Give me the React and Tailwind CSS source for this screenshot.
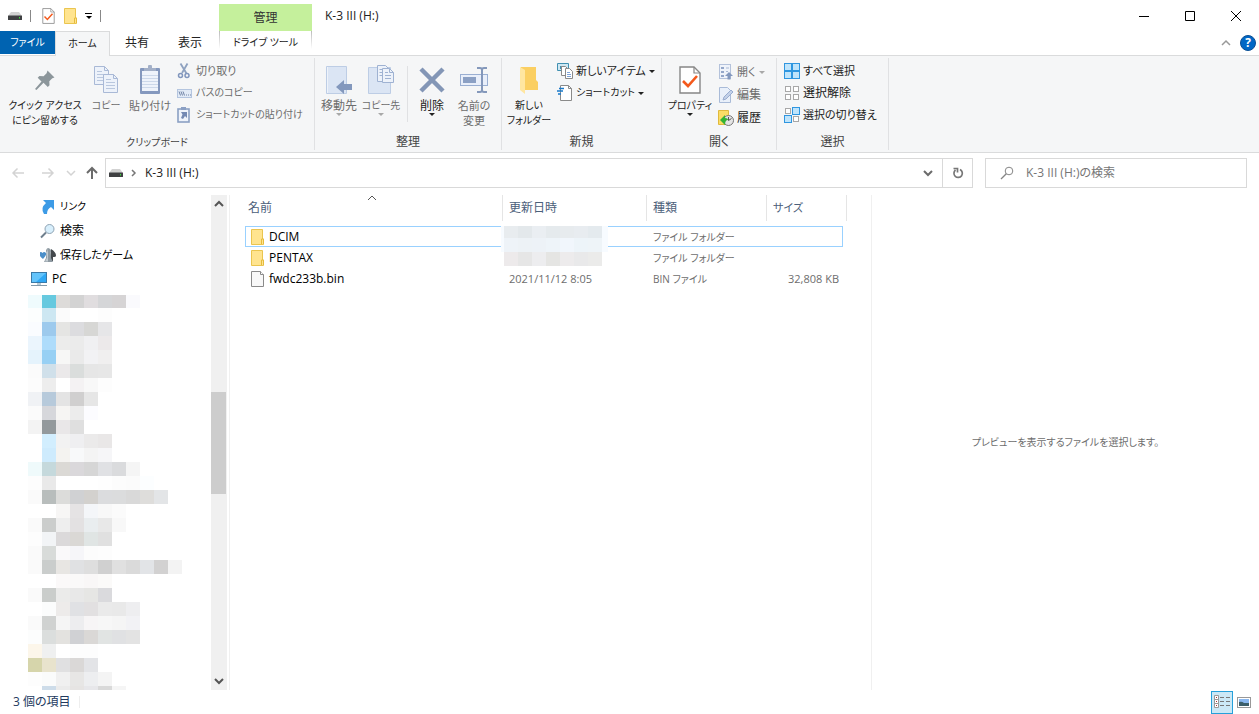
import React, { useState } from 'react';

// ---------- pixelated areas: 14px cells, '' = empty ----------
const treeCells = [
  ['#effbfd', '#66c9df', '#dddbd9', '#d3d3d3', '#e0dddf', '#d5d6d8', '#d6d4d5', '#fafafd'],
  ['#fcfefe', '#cde7f2', '#fbfbfb', '', '', '#fdfdfd'],
  ['#fafcff', '#9dcaed', '#e5e5e3', '#dcdcdf', '#d7d7d5', '#e6e6e8'],
  ['#ebf5fd', '#aedcfb', '#ececeb', '#ebebeb', '#f0f0f2', '#ece9ea'],
  ['#e5f3fc', '#97d0f4', '#f7f7f6', '#eaeaea', '#f2f2f4', '#f0efef'],
  ['#fbfbfb', '#d0e0ea', '#ebe9ea', '#dadddc', '#e6e6e6', '#e7e7e7'],
  ['#fcfcfc', '#ededed', '', '#f4f2f3', '#f8f8f8', '#fdfdfd'],
  ['#f0f2f5', '#b7cadb', '#e4e4e4', '#d0cfcf', '#e6e6e6'],
  ['#fbfbfb', '#d6d7db', '#f6f5f3', '#ececec', '#fcfcff'],
  ['#f3f3f3', '#93999c', '#e9e7e8', '#dfdfdf'],
  ['', '#d2eefe', '#f2f2f2', '#efeff1', '#ebeaea', '#e9e7e7'],
  ['', '#ceebfd', '#f4f3f0', '#f8f9fa', '#f4f4f4', '#f6f6f8'],
  ['#effafb', '#c5d9dc', '#dbd9d5', '#dad8db', '#d6d6d6', '#e0e1e4', '#dadbdd', '#f5f5f5'],
  ['#fdfdfd', '#e9e9e9', '', '', '', '#fefefe', '#fcfcfc', '#fbfbfb', '#fcfeff'],
  ['#fafafa', '#b8bdbc', '#dcdcda', '#d0d1d3', '#d3d1ce', '#dbdcde', '#dbdcdd', '#d9d9d9', '#dedddb', '#e3e5e7'],
  ['', '', '#f7f6f5', '#e5e3e4', '#f4f6f9', '#f8f8f8', '#fbfbfb'],
  ['#fafafa', '#cbcdcc', '#eeeeee', '#e3e1e2', '#e9edef', '#e8e8e8', '#f8f8f8'],
  ['#fdfdfd', '#f2f4f6', '#dbd9da', '#dad8d5', '#e0e5e4', '#e0e0e0'],
  ['#fafafa', '#d8dbd9', '#faf9fa', '#f6f6f9', '#fcfcfc', '#fdfdfd'],
  ['#fafafa', '#cacdcc', '#e8e6e3', '#e0e1e3', '#dedede', '#d0d0d0', '#e0e0e0', '#dadada', '#e2e4e7', '#d2d1d1', '#f3f3f3'],
  ['', '', '#fbf9f9', '#faf9f9', '#f9f7f7', '#fbfaf9'],
  ['#fafafa', '#cacdcb', '#ebebea', '#e8e8e8', '#e6e6e4', '#dadadd'],
  ['', '#fbfcfc', '#edebea', '#e0e1e4', '#e2e0e1', '#eaeaea', '#e9e9e9', '#eeeef0'],
  ['#fafafa', '#d0d2d1', '#f5f5f5', '#ededef', '#f7f5f6', '#f7f7f7', '#f5f5f5', '#f2f2f5'],
  ['#fcfdfd', '#dbdedd', '#e3e2df', '#d0d1d4', '#dad8d6', '#e1e4e3', '#e0e1e3', '#e3e3e3'],
  ['#fcf6ea', '#eff0f0', '', '#fdfdfd', '#fdfdfd'],
  ['#d6d5ab', '#e8e3cd', '#e0e0e1', '#dad8d7', '#e3e4e7'],
  ['#fdfdfd', '#fafbfb', '#f0f0f0', '#e7e6e5', '#edeef0', '#f4f4f4'],
  ['', '#cddce9', '#ebebeb', '#e6e4e3', '#e7e7ea', '#d9d9d9', '#f5f5f5'],
];

const dateCells = [
  ['#e8ecef', '#e3e8eb', '#eaeef2', '#e5eaed', '#e7ebee', '#e8ecf0', '#e4eaee'],
  ['#eef3f8', '#edf2f6', '#edf2f7', '#eef4f9', '#f1f6fc', '#edf4f9', '#eef4f8'],
  ['#edeaeb', '#e6e6e6', '#ededef', '#e5e5e3', '#edebec', '#e9e9ea', '#ebebea'],
];

function Cells({ rows, x = 0, y = 0 }) {
  return rows.map((row, r) =>
    row.map((c, i) => c && <rect key={`${r}-${i}`} x={x + i * 14} y={y + r * 14} width="14" height="14" fill={c} />)
  );
}

// ---------- icons ----------
function Svg({ w = 16, h = 16, children, className = '' }) {
  return (
    <svg width={w} height={h} viewBox={`0 0 ${w} ${h}`} fill="none" className={`block shrink-0 ${className}`} aria-hidden="true">
      {children}
    </svg>
  );
}

const Drive = () => (
  <Svg w={14} h={10}>
    <path d="M3 1h8l3 4H0z" fill="#d2d2d2" />
    <rect y="4.500" width="14" height="4.500" rx="0.500" fill="#3f4042" />
    <rect x="11" y="6" width="1" height="1.500" fill="#3be03b" />
  </Svg>
);

const CheckDoc = ({ w = 13, h = 16 }) => (
  <svg width={w} height={h} viewBox="0 0 22 28" fill="none" className="block shrink-0" aria-hidden="true">
    <path d="M1 1h14l6 6v20H1z" fill="#fff" stroke="#878787" strokeWidth="1.400" />
    <path d="M15 1v6h6" stroke="#878787" strokeWidth="1.200" />
    <path d="M4 15l5 5 9-10" stroke="#f4591c" strokeWidth="2.600" />
  </svg>
);

const Folder = () => (
  <Svg w={13} h={16}>
    <path d="M0.500 0.500h11v9.500h1v5.500h-12z" fill="#ffe48f" stroke="#eac54f" />
    <path d="M10.500 15v-5h2v5" fill="#ffe48f" stroke="#e5bb3d" />
  </Svg>
);

const FileIcon = () => (
  <Svg w={13} h={16}>
    <path d="M0.500 0.500h9l3 3v12h-12z" fill="#f8f8f8" stroke="#8a8a8a" />
    <path d="M9.500 0.500v3h3" fill="#fff" stroke="#8a8a8a" />
  </Svg>
);

const Pin = () => (
  <Svg w={20} h={20}>
    <path d="M12.500 0.500l7 7-2.200 0.800-3 3 0.200 4-1.700 1.700-4.300-4.300L1.500 20 0 19l6.500-7.500-3.800-3.800 1.700-1.700 4.200 0.200 3-3z" fill="#8c969b" />
  </Svg>
);

const Page = ({ x, y }) => (
  <g transform={`translate(${x} ${y})`}>
    <path d="M0.500 0.500h10l4 4v14h-14z" fill="#edf2fa" stroke="#a9b9d6" />
    <path d="M10.500 0.500v4h4" stroke="#a9b9d6" />
    <path d="M3 5.500h5M3 8.500h9M3 11.500h9M3 14.500h9" stroke="#b9c7de" />
  </g>
);

const Copy = () => (
  <Svg w={24} h={30}>
    <Page x={0} y={1} />
    <Page x={9} y={9} />
  </Svg>
);

const Paste = () => (
  <Svg w={20} h={30}>
    <rect y="3" width="20" height="26" rx="1" fill="#8498be" />
    <rect x="2" y="6" width="16" height="20" fill="#eef3fb" />
    <path d="M2 10.500h16M2 13.500h16M2 16.500h16M2 19.500h16M2 22.500h16" stroke="#ccd8ea" />
    <path d="M4 6V3h4V1.500a1.500 1.500 0 0 1 4 0V3h4v3z" fill="#a3b0c8" />
  </Svg>
);

const MoveTo = () => (
  <Svg w={26} h={30}>
    <path d="M0.500 1.500h20v27h-20z" fill="#dbe5f4" stroke="#bdcde5" />
    <path d="M1.500 2v26" stroke="#eef3fa" />
    <path d="M10 22l8-7v4h8v6h-8v4z" fill="#8398bd" />
  </Svg>
);

const CopyTo = () => (
  <Svg w={26} h={30}>
    <path d="M0.500 2.500h22v26h-22z" fill="#dbe5f4" stroke="#bdcde5" />
    <g stroke="#9fb2d2">
      <path d="M9.500 0.500h8l3 3v13h-11z" fill="#edf2fa" />
      <path d="M11.500 4.500h5M11.500 7.500h5M11.500 10.500h5" />
      <path d="M14.500 3.500h7l4 4v10h-11z" fill="#edf2fa" />
      <path d="M21.500 3.500v4h4M17 7.500h3M17 10.500h6M17 13.500h6" />
    </g>
  </Svg>
);

const Delete = () => (
  <Svg w={26} h={26}>
    <path d="M2 2l22 22M24 2L2 24" stroke="#8396b6" strokeWidth="4.500" />
  </Svg>
);

const Rename = () => (
  <Svg w={28} h={28}>
    <rect x="0.500" y="8.500" width="27" height="11" fill="#e9effa" stroke="#9aafd2" />
    <rect x="3" y="11" width="13" height="6" fill="#8ba0c4" />
    <path d="M17 2h3q2 0 2 2v20q0 2-2 2h-3M27 2h-3q-2 0-2 2M27 26h-3q-2 0-2-2" stroke="#8498bb" strokeWidth="2" />
  </Svg>
);

const NewFolder = () => (
  <Svg w={20} h={28}>
    <path d="M2 1h15v13l2 2v8H2z" fill="#fbcf62" />
    <path d="M1 1l5 3v24l-5-4z" fill="#ffe6a0" />
  </Svg>
);

const Scissors = () => (
  <Svg>
    <path d="M3.500 0.500l6 10M10.500 0.500L5 10" stroke="#8fa2c0" strokeWidth="1.800" />
    <circle cx="3.500" cy="12.500" r="2" stroke="#8196bd" strokeWidth="1.500" />
    <circle cx="10" cy="12.500" r="2" stroke="#8196bd" strokeWidth="1.500" />
  </Svg>
);

const PathIcon = () => (
  <Svg>
    <rect x="0.500" y="4.500" width="14" height="8" fill="#e1eaf6" stroke="#b4c5df" />
    <path d="M2 6.500l1.500 4M4 6.500l1.500 4M6 6.500l1.500 4" stroke="#6f82a5" />
    <path d="M9 10h1M11 10h1M13 10h1" stroke="#6f82a5" />
  </Svg>
);

const PasteLink = () => (
  <Svg>
    <rect x="1" y="2" width="11" height="13" fill="#eef3fb" stroke="#8ba0c4" strokeWidth="1.600" />
    <rect x="4" y="0" width="5" height="3" fill="#8ba0c4" />
    <path d="M4 5h6v6L8 9 6 12 4 11l1.500-3.500z" fill="#7389b3" />
  </Svg>
);

const NewItem = () => (
  <Svg>
    <path d="M0.500 0.500h11v7h-11z" fill="#cfe8f3" stroke="#4190b1" />
    <path d="M3 3h3v3H3z" fill="#4190b1" />
    <path d="M4.500 3.500h4l2 2v7h-6z" fill="#fff" stroke="#8a8a8a" />
    <path d="M8.500 5.500h4l3 3v7h-7z" fill="#fff" stroke="#8a8a8a" />
    <path d="M10 9.500h3M10 11.500h4M10 13.500h4" stroke="#7ea3d8" />
  </Svg>
);

const Shortcut = () => (
  <Svg>
    <path d="M3.500 0.500h8l3 3v12h-11z" fill="#fff" stroke="#8a8a8a" />
    <path d="M11.500 0.500v3h3" stroke="#8a8a8a" />
    <path d="M2 3.500h5M0 6h6M1 9h3" stroke="#1979ca" strokeWidth="1.500" />
  </Svg>
);

const OpenIcon = () => (
  <Svg>
    <rect x="1.500" y="0.500" width="11" height="14" fill="#eff3fa" stroke="#b4c2db" />
    <path d="M3 3h3v2H3zM3 7h3v2H3zM3 11h3v2H3z" fill="#94a7c9" />
    <path d="M8 4h3M8 7.500h2" stroke="#a9b9d4" />
    <path d="M7 12l4-4 4 4h-2.500v3.500h-3V12z" fill="#8398bd" />
  </Svg>
);

const EditIcon = () => (
  <Svg>
    <path d="M1.500 0.500h8l3 3v12h-11z" fill="#e9f0fa" stroke="#a9bbd8" />
    <path d="M5 13l1-3 7-7 2 2-7 7z" fill="#c3d1e8" stroke="#98acd0" />
  </Svg>
);

const HistoryIcon = () => (
  <Svg>
    <path d="M0.500 0.500h10v14h-10z" fill="#fbdd66" stroke="#e0b93c" />
    <circle cx="10.500" cy="10.500" r="5" fill="#e4e4e4" stroke="#777" />
    <path d="M10.500 7v3.500l3-2" stroke="#555" />
    <path d="M2 10l5-5v3q3 0 3 2-3 0-3 5z" fill="#35b334" />
  </Svg>
);

const boxes = [[1, 1], [9, 1], [1, 9], [9, 9]];

// mask holds which of the four boxes are filled
const SelectIcon = ({ mask }) => (
  <Svg>
    {boxes.map(([x, y], i) =>
      mask[i] ? (
        <rect key={i} x={x - 0.5} y={y - 0.5} width="7" height="7" fill="#bfe4fb" stroke="#2f96e0" />
      ) : (
        <rect key={i} x={x + 0.5} y={y + 0.5} width="5" height="5" fill="#fff" stroke="#a8a8a8" />
      )
    )}
    {mask.every(Boolean) && <path d="M8 0v16M0 8h16" stroke="#2f96e0" strokeWidth="1.500" />}
  </Svg>
);

const LinkIcon = () => (
  <Svg>
    <path d="M3 1h11v10l-3-3q-4 2-4 7H4q-4-6 2-11z" fill="#3d9be6" />
  </Svg>
);

const Magnifier = () => (
  <Svg>
    <circle cx="9.500" cy="6" r="4.500" fill="#d8effc" stroke="#8fa3b3" />
    <path d="M6 9.500L1 14.500" stroke="#6f7f8d" strokeWidth="2" />
  </Svg>
);

const GameIcon = () => (
  <Svg>
    <path d="M11 2q5 3 5 6.500 0 2-3 1.500v4h-3z" fill="#43484c" />
    <path d="M8 1a3 3 0 0 1 2.500 4.500L11 11l2 4H4l2-4 0.500-5.500A3 3 0 0 1 8 1z" fill="#8e9aa2" />
    <path d="M8 1.500v13H5l2-4V5.500z" fill="#c3ccd2" />
    <path d="M-1 6q2-2 3.500 0Q4 4 6 6q1 2-3 6Q-1 9-1 6z" fill="#4c8fc9" />
  </Svg>
);

const PcIcon = () => (
  <Svg w={17}>
    <rect x="0.500" y="1.500" width="15" height="10" fill="#2fa8f5" stroke="#3a7aa8" />
    <path d="M1 2h14L5 11H1z" fill="#63c4fb" />
    <path d="M6 12h4v2H6z" fill="#b9cbd6" />
    <path d="M0 14.500h16" stroke="#8299a9" />
  </Svg>
);

const Chevron = ({ dir = 'down', color = '#555', sw = 1.5 }) => {
  const d = { down: 'M1 3l4 4 4-4', up: 'M1 7l4-4 4 4', right: 'M3 2l3 3-3 3' }[dir];
  return (
    <Svg w={10} h={10}>
      <path d={d} stroke={color} strokeWidth={sw} />
    </Svg>
  );
};

const Caret = ({ color = '#222' }) => (
  <Svg w={6} h={3}>
    <path d="M0 0h6L3 3z" fill={color} />
  </Svg>
);

const Arrow = ({ dir, color }) => {
  const d = { left: 'M13 7H2M6.500 2.500L2 7l4.500 4.500', right: 'M1 7h11M7.500 2.500L12 7l-4.500 4.500', up: 'M7 13V2M2 7l5-5 5 5' }[dir];
  return (
    <Svg w={14} h={14}>
      <path d={d} stroke={color} strokeWidth={dir === 'up' ? 2 : 1.5} />
    </Svg>
  );
};

// ---------- ribbon ----------
// size: text-xs for kanji labels, smaller for the ones made of kana
function BigButton({ icon, lines, width, disabled, caret, size = 'text-xs' }) {
  return (
    <button type="button" disabled={disabled} className={`flex flex-col items-center ${width} ${size} ${disabled ? 'text-[#6d6d6d]' : 'text-[#222]'}`}>
      <span className="flex h-8 items-center justify-center">{icon}</span>
      <span className="mt-0.5 flex flex-col items-center whitespace-nowrap leading-[15px]">
        {lines.map((l) => (
          <span key={l}>{l}</span>
        ))}
      </span>
      {caret && <Caret color={disabled ? '#a8a8a8' : '#222'} />}
    </button>
  );
}

function SmallButton({ icon, label, disabled, caret, size = 'text-xs' }) {
  return (
    <button type="button" disabled={disabled} className={`flex h-[22px] items-center gap-[3px] whitespace-nowrap ${size} ${disabled ? 'text-[#6d6d6d]' : 'text-[#222]'}`}>
      {icon}
      <span>{label}</span>
      {caret && <Caret color={disabled ? '#a8a8a8' : '#222'} />}
    </button>
  );
}

function Group({ label, width, size = 'text-xs', children }) {
  return (
    <section className={`my-0.5 flex shrink-0 flex-col border-r border-[#e0e1e3] ${width}`}>
      <div className="flex flex-1">{children}</div>
      <h2 className={`text-center leading-4 text-[#444] ${size}`}>{label}</h2>
    </section>
  );
}

function Ribbon() {
  return (
    <div className="flex h-[98px] border-y border-[#dadbdc] bg-[#f5f6f7]">
      <Group label="クリップボード" width="w-[315px]" size="text-[10px]">
        <div className="flex pl-[5px] pt-1.5">
          <BigButton icon={<Pin />} lines={['クイック アクセス', 'にピン留めする']} width="w-20" size="text-[10px]" />
          <BigButton icon={<Copy />} lines={['コピー']} width="w-[42px]" size="text-[10px]" disabled />
          <BigButton icon={<Paste />} lines={['貼り付け']} width="w-[46px]" size="text-[11px]" disabled />
        </div>
        <div className="flex flex-col pl-1 pt-0.5">
          <SmallButton icon={<Scissors />} label="切り取り" size="text-[11px]" disabled />
          <SmallButton icon={<PathIcon />} label="パスのコピー" size="text-[10px]" disabled />
          <SmallButton icon={<PasteLink />} label="ショートカットの貼り付け" size="text-[10px]" disabled />
        </div>
      </Group>
      <Group label="整理" width="w-[187px]">
        <div className="flex pl-[3px] pt-1.5">
          <BigButton icon={<MoveTo />} lines={['移動先']} width="w-[42px]" disabled caret />
          <BigButton icon={<CopyTo />} lines={['コピー先']} width="w-[42px]" size="text-[10px]" disabled caret />
          <div className="ml-[5px] mr-0.5 mt-0.5 h-14 w-px bg-[#e0e1e3]" />
          <BigButton icon={<Delete />} lines={['削除']} width="w-11" caret />
          <BigButton icon={<Rename />} lines={['名前の', '変更']} width="w-10" size="text-[11px]" disabled />
        </div>
      </Group>
      <Group label="新規" width="w-40">
        <div className="flex pl-0.5 pt-1.5">
          <BigButton icon={<NewFolder />} lines={['新しい', 'フォルダー']} width="w-[50px]" size="text-[10px]" />
        </div>
        <div className="flex flex-col pl-[3px] pt-0.5">
          <SmallButton icon={<NewItem />} label="新しいアイテム" size="text-[11px]" caret />
          <SmallButton icon={<Shortcut />} label="ショートカット" size="text-[10px]" caret />
        </div>
      </Group>
      <Group label="開く" width="w-[115px]">
        <div className="flex pl-1 pt-1.5">
          <BigButton icon={<CheckDoc w={22} h={28} />} lines={['プロパティ']} width="w-12" size="text-[10px]" caret />
        </div>
        <div className="flex flex-col gap-px pl-1 pt-[3px]">
          <SmallButton icon={<OpenIcon />} label="開く" size="text-[11px]" disabled caret />
          <SmallButton icon={<EditIcon />} label="編集" disabled />
          <SmallButton icon={<HistoryIcon />} label="履歴" />
        </div>
      </Group>
      <Group label="選択" width="w-28">
        <div className="flex flex-col pl-[7px] pt-0.5">
          <SmallButton icon={<SelectIcon mask={[1, 1, 1, 1]} />} label="すべて選択" size="text-[11px]" />
          <SmallButton icon={<SelectIcon mask={[0, 0, 0, 0]} />} label="選択解除" />
          <SmallButton icon={<SelectIcon mask={[0, 1, 1, 0]} />} label="選択の切り替え" size="text-[11px]" />
        </div>
      </Group>
    </div>
  );
}

// ---------- title bar and tabs ----------
function Header() {
  return (
    <header>
      <div className="flex h-[31px]">
        <div className="flex w-[219px] items-center pl-2">
          <Drive />
          <span className="ml-2 h-3 w-px bg-[#888]" />
          <button type="button" aria-label="プロパティ" className="ml-[11px]"><CheckDoc /></button>
          <button type="button" aria-label="新しいフォルダー" className="ml-[9px]"><Folder /></button>
          <button type="button" aria-label="カスタマイズ" className="ml-2 flex flex-col items-center gap-0.5">
            <span className="h-px w-[7px] bg-black" />
            <Caret color="#000" />
          </button>
          <span className="ml-2 h-3 w-px bg-[#888]" />
        </div>
        <div className="mt-1 flex w-[93px] items-center justify-center bg-[#c5f09c] text-[#333]">管理</div>
        <h1 className="flex flex-1 items-center pl-[13px] text-[#222]">K-3 III (H:)</h1>
        <button type="button" aria-label="最小化" className="flex w-[46px] items-center justify-center">
          <Svg w={10} h={10}><path d="M0 5.500h10" stroke="#000" /></Svg>
        </button>
        <button type="button" aria-label="最大化" className="flex w-[46px] items-center justify-center">
          <Svg w={10} h={10}><path d="M0.500 0.500h9v9h-9z" stroke="#000" /></Svg>
        </button>
        <button type="button" aria-label="閉じる" className="flex w-[46px] items-center justify-center">
          <Svg w={10} h={10}><path d="M0 0l10 10M10 0L0 10" stroke="#000" /></Svg>
        </button>
      </div>
      <nav className="flex h-6 text-[#222]">
        <button type="button" className="mb-px w-[55px] bg-[#0063b1] text-[10px] text-white">ファイル</button>
        <button type="button" className="relative -mb-px w-[55px] border-x border-t border-[#dadbdc] bg-[#f5f6f7] pb-px text-[10px]">ホーム</button>
        <button type="button" className="w-[54px]">共有</button>
        <button type="button" className="w-[52px]">表示</button>
        <div className="ml-[3px] flex w-[93px]">
          <span className="h-[18px] w-px bg-linear-to-b from-[#bbb] to-white" />
          <button type="button" className="flex-1 text-[10px]">ドライブ ツール</button>
          <span className="h-[18px] w-px bg-linear-to-b from-[#bbb] to-white" />
        </div>
        <div className="flex flex-1 items-center justify-end gap-[9px] pr-[3px]">
          <button type="button" aria-label="リボンの最小化"><Chevron dir="up" color="#999" /></button>
          <button type="button" className="h-4 w-4 rounded-full border border-[#0a4f94] bg-[#0067c5] text-xs font-bold leading-[14px] text-white">?</button>
        </div>
      </nav>
    </header>
  );
}

function AddressBar() {
  return (
    <div className="flex h-[42px] pb-[7px] pr-3 pt-[5px]">
      <div className="flex w-[105px] shrink-0 items-center pl-[11px]">
        <button type="button" aria-label="戻る"><Arrow dir="left" color="#d3d3d3" /></button>
        <button type="button" aria-label="進む" className="ml-4"><Arrow dir="right" color="#d3d3d3" /></button>
        <button type="button" aria-label="最近表示した場所" className="ml-[11px]"><Chevron color="#d3d3d3" /></button>
        <button type="button" aria-label="上へ" className="ml-[9px]"><Arrow dir="up" color="#6b6b6b" /></button>
      </div>
      <div className="flex flex-1 items-center border border-[#d9d9d9] pl-[3px]">
        <Drive />
        <span className="ml-[6px]"><Chevron dir="right" color="#777" /></span>
        <button type="button" className="ml-[6px] text-[#222]">K-3 III (H:)</button>
        <button type="button" aria-label="以前の場所" className="ml-auto mr-[9px]"><Chevron sw={2} color="#6b6b6b" /></button>
      </div>
      <button type="button" aria-label="最新の情報に更新" className="flex w-[30px] items-center justify-center border border-l-0 border-[#d9d9d9]">
        <Svg w={12} h={12}>
          <path d="M8 2.500A4.200 4.200 0 1 1 3.500 3M1.500 1.500h4v4" stroke="#777" strokeWidth="1.700" />
        </Svg>
      </button>
      <label className="ml-3 flex w-[262px] items-center gap-3 border border-[#d9d9d9] pl-[14px]">
        <Svg w={14} h={14}>
          <circle cx="9" cy="5" r="3.800" stroke="#858585" />
          <path d="M6.300 7.700L1 13" stroke="#858585" strokeWidth="1.300" />
        </Svg>
        <input type="search" aria-label="検索" placeholder="K-3 III (H:)の検索" className="min-w-0 flex-1 outline-none placeholder:text-[#757575]" />
      </label>
    </div>
  );
}

// ---------- body ----------
const treeItems = [
  { label: 'リンク', icon: <LinkIcon />, pad: 'pl-10', size: 'text-[10px]' },
  { label: '検索', icon: <Magnifier />, pad: 'pl-10', size: 'text-xs' },
  { label: '保存したゲーム', icon: <GameIcon />, pad: 'pl-10', size: 'text-[11px]' },
  { label: 'PC', icon: <PcIcon />, pad: 'pl-[31px]', size: 'text-xs' },
];

function Sidebar() {
  return (
    <aside className="flex w-[230px] shrink-0 border-r border-[#f0f0f0] pr-0.5">
      <nav className="min-w-0 flex-1 overflow-hidden">
        {treeItems.map((t) => (
          <button key={t.label} type="button" className={`flex h-6 w-full items-center gap-1 whitespace-nowrap text-black ${t.pad} ${t.size}`}>
            {t.icon}
            {t.label}
          </button>
        ))}
        <svg width="154" height="395" viewBox="0 1 154 395" className="ml-7 mt-1 block" aria-hidden="true">
          <Cells rows={treeCells} />
        </svg>
      </nav>
      <div className="flex w-4 flex-col items-center bg-[#f0f0f0] py-1">
        <Chevron dir="up" sw={2} />
        <span className="mr-px mt-[183px] h-[102px] w-[15px] bg-[#cdcdcd]" />
        <span className="mt-auto"><Chevron sw={2} /></span>
      </div>
    </aside>
  );
}

const files = [
  { name: 'DCIM', icon: <Folder />, date: '', type: 'ファイル フォルダー', size: '' },
  { name: 'PENTAX', icon: <Folder />, date: '', type: 'ファイル フォルダー', size: '' },
  { name: 'fwdc233b.bin', icon: <FileIcon />, date: '2021/11/12 8:05', type: 'BIN ファイル', size: '32,808 KB' },
];

function FileList() {
  const [selected, setSelected] = useState('DCIM');
  const th = 'border-r border-[#e5e5e5] text-left font-normal';

  return (
    <main className="flex-1 pl-[15px]">
      <table className="w-[602px] table-fixed border-separate border-spacing-0">
        <colgroup>
          <col className="w-[258px]" />
          <col className="w-36" />
          <col className="w-30" />
          <col className="w-[76px]" />
          <col className="w-1" />
        </colgroup>
        <thead className="text-[#4c607a]">
          <tr className="h-[26px]">
            <th className={`relative pl-[3px] ${th}`}>
              名前
              <span className="absolute -top-0.5 left-[122px]"><Chevron dir="up" sw={1} /></span>
            </th>
            <th className={`pl-1.5 ${th}`}>更新日時</th>
            <th className={`pl-1.5 ${th}`}>種類</th>
            <th className="pl-1.5 text-left text-[11px] font-normal">サイズ</th>
            <th className={th} />
          </tr>
        </thead>
        <tbody className="text-[11px] text-[#6d6d6d]">
          <tr className="h-[5px]"><td colSpan={5} /></tr>
          {files.map((f, i) => {
            const edge = f.name === selected ? 'border-[#99d1ff]' : 'border-transparent';
            return (
              <tr key={f.name} className="h-[21px]" onClick={() => setSelected(f.name)}>
                <td className={`border-y border-l pl-[5px] ${edge}`}>
                  <span className="flex items-center gap-[5px] text-xs text-black">
                    {f.icon}
                    {f.name}
                  </span>
                </td>
                <td className={`relative border-y pl-1.5 leading-4 ${edge}`}>
                  {f.date}
                  {i === 0 && (
                    <svg width="107" height="41" className="absolute -left-0.5 -top-px z-10" aria-hidden="true">
                      <path d="M0 0h107v26H0z" fill="#f7fbff" />
                      <Cells rows={dateCells} x={3} y={-2} />
                    </svg>
                  )}
                </td>
                <td className={`border-y pl-1.5 text-[10px] leading-4 ${edge}`}>{f.type}</td>
                <td className={`whitespace-nowrap border-y border-r pr-[3px] text-right leading-4 ${edge}`}>{f.size}</td>
                <td />
              </tr>
            );
          })}
        </tbody>
      </table>
    </main>
  );
}

function StatusBar() {
  return (
    <footer className="flex h-6 items-center pl-[13px] text-[#223a5e]">
      <span>3 個の項目</span>
      <span className="ml-2 h-3 w-px bg-[#eee]" />
      <div className="ml-auto flex items-center gap-1 pr-2">
        <button type="button" aria-label="詳細" className="flex h-[23px] w-[22px] items-center justify-center border border-[#26a0da] bg-[#cbe8f6]">
          <Svg w={16} h={14}>
            <path d="M0.500 0.500h4v4h-4zM0.500 4.500h4v4h-4zM0.500 8.500h4v4h-4z" fill="#fff" stroke="#999" />
            <path d="M2 2.500h1M2 6.500h1M2 10.500h1" stroke="#a33" />
            <path d="M6 2.500h4M12 2.500h4M6 6.500h4M12 6.500h4M6 10.500h4M12 10.500h4" stroke="#777" />
          </Svg>
        </button>
        <button type="button" aria-label="大アイコン">
          <Svg w={14} h={11}>
            <rect x="0.500" y="0.500" width="13" height="10" fill="#fff" stroke="#999" />
            <path d="M2 2h10v4H2z" fill="#8ab8f0" />
            <path d="M2 5q3-1 5 1h5v3H2z" fill="#3c5f6a" />
          </Svg>
        </button>
      </div>
    </footer>
  );
}

function App() {
  return (
    <div
      lang="ja"
      className="flex min-h-screen flex-col bg-white text-xs [font-family:'Open_Sans','Noto_Sans_CJK_JP',sans-serif] [font-feature-settings:'palt']"
    >
      <Header />
      <Ribbon />
      <AddressBar />
      <div className="flex flex-1">
        <Sidebar />
        <FileList />
        <aside className="flex w-[388px] items-center justify-center border-l border-[#f0f0f0] text-[10px] text-[#6d6d6d]">
          プレビューを表示するファイルを選択します。
        </aside>
      </div>
      <StatusBar />
    </div>
  );
}

export default App;
